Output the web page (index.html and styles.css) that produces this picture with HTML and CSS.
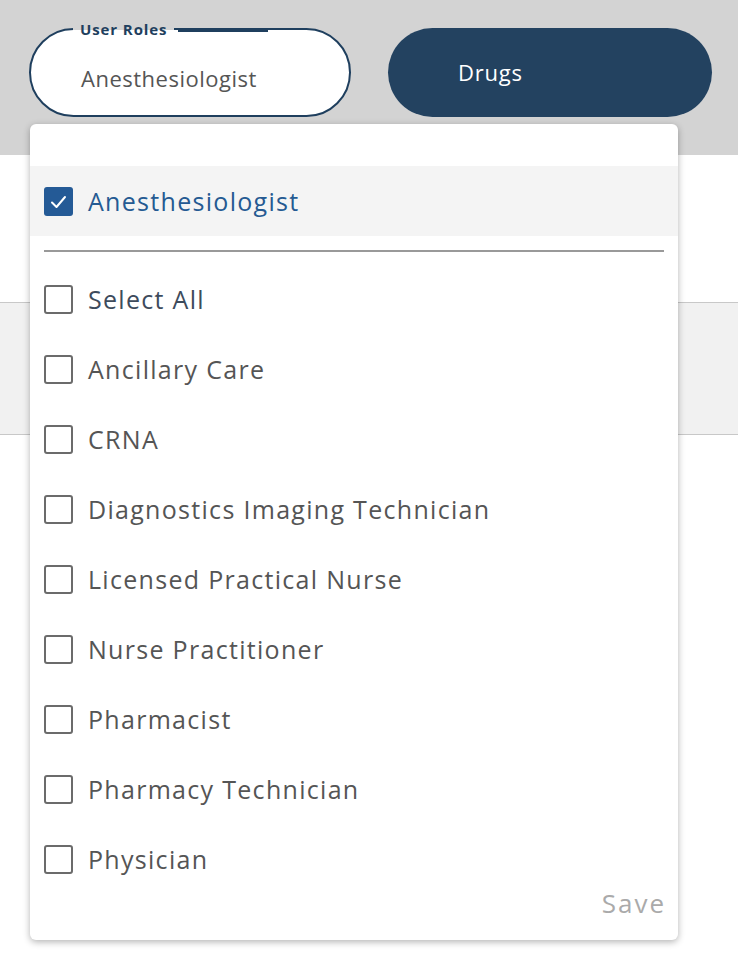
FILE: index.html
```html
<!DOCTYPE html>
<html>
<head>
<meta charset="utf-8">
<link rel="stylesheet" href="styles.css">
</head>
<body>
<div class="page">
  <div class="top">
    <div class="field">
      <span class="legend">User Roles</span>
      <span class="legend-bar"></span>
      <span class="value">Anesthesiologist</span>
    </div>
    <div class="btn">Drugs</div>
  </div>
  <div class="blank"></div>
  <div class="band"></div>

  <div class="dropdown">
    <div class="selected-row">
      <span class="cb checked"><svg width="29" height="29" viewBox="0 0 29 29"><path d="M8 15.5 L12.5 20 L21 10" fill="none" stroke="#fff" stroke-width="2" stroke-linecap="round" stroke-linejoin="round"/></svg></span>
      <span class="label sel">Anesthesiologist</span>
    </div>
    <div class="divider"></div>
    <div class="list">
      <div class="row"><span class="cb"></span><span class="label all">Select All</span></div>
      <div class="row"><span class="cb"></span><span class="label">Ancillary Care</span></div>
      <div class="row"><span class="cb"></span><span class="label">CRNA</span></div>
      <div class="row"><span class="cb"></span><span class="label">Diagnostics Imaging Technician</span></div>
      <div class="row"><span class="cb"></span><span class="label">Licensed Practical Nurse</span></div>
      <div class="row"><span class="cb"></span><span class="label">Nurse Practitioner</span></div>
      <div class="row"><span class="cb"></span><span class="label">Pharmacist</span></div>
      <div class="row"><span class="cb"></span><span class="label">Pharmacy Technician</span></div>
      <div class="row"><span class="cb"></span><span class="label">Physician</span></div>
    </div>
    <div class="save-row"><span class="save">Save</span></div>
  </div>
</div>
</body>
</html>
```

FILE: styles.css
```css
* { box-sizing: border-box; }
html, body { margin: 0; padding: 0; }
body {
  width: 738px;
  height: 962px;
  background: #fff;
  font-family: "Open Sans", "Liberation Sans", sans-serif;
  overflow: hidden;
}
.page { position: relative; width: 738px; height: 962px; }
.top {
  height: 155px;
  background: #d3d3d3;
  display: flex;
  gap: 37px;
  padding: 28px 0 0 29px;
}
.field {
  position: relative;
  width: 322px;
  height: 89px;
  border: 2px solid #1f3f5e;
  border-radius: 45px;
  background: #fff;
  display: flex;
  align-items: center;
  padding: 10px 0 0 50px;
}
.legend {
  position: absolute;
  top: -11px;
  left: 42px;
  padding: 0 7px;
  font-size: 15px;
  font-weight: 700;
  color: #1f3f5e;
  line-height: 20px;
  letter-spacing: 0.9px;
  background: linear-gradient(#d3d3d3 55%, #fff 55%);
}
.legend-bar {
  position: absolute;
  top: -2px;
  left: 147px;
  width: 90px;
  height: 3.5px;
  background: #1f3f5e;
}
.value {
  font-size: 22px;
  letter-spacing: 0.5px;
  color: #555;
}
.btn {
  width: 324px;
  height: 89px;
  border-radius: 45px;
  background: #234260;
  color: #fff;
  font-size: 22px;
  letter-spacing: 0.8px;
  font-weight: 500;
  display: flex;
  align-items: center;
  padding: 0 0 2px 70px;
}
.blank { height: 147px; }
.band {
  height: 133px;
  background: #f1f1f1;
  border-top: 1px solid #c8c8c8;
  border-bottom: 1px solid #c8c8c8;
}
.dropdown {
  position: absolute;
  top: 124px;
  left: 30px;
  width: 648px;
  height: 816px;
  background: #fff;
  border-radius: 6px;
  box-shadow: 0 2px 7px rgba(0,0,0,0.3);
  padding-top: 42px;
}
.selected-row {
  height: 70px;
  background: #f4f4f4;
  display: flex;
  align-items: center;
  gap: 15px;
  padding-left: 14px;
}
.cb {
  width: 29px;
  height: 29px;
  flex: none;
  border: 2px solid #6b6b6b;
  border-radius: 3px;
  background: #fff;
  position: relative;
}
.cb.checked {
  background: #245a96;
  border: none;
}
.cb svg { display: block; }
.label {
  font-size: 25px;
  font-weight: 500;
  letter-spacing: 1.3px;
  color: #555;
  line-height: 30px;
}
.label.sel { color: #255a92; }
.label.all { color: #3d4b5c; }
.divider {
  margin: 14px 14px 0;
  height: 2px;
  background: #999;
}
.list {
  margin-top: 27px;
  display: flex;
  flex-direction: column;
  gap: 30px;
  padding-left: 14px;
}
.row {
  height: 40px;
  display: flex;
  align-items: center;
  gap: 15px;
}
.save-row {
  display: flex;
  justify-content: flex-end;
  padding: 9px 14px 0 0;
}
.save {
  font-size: 26px;
  letter-spacing: 2px;
  margin-right: -2px;
  color: #aaa;
  line-height: 30px;
}
```
